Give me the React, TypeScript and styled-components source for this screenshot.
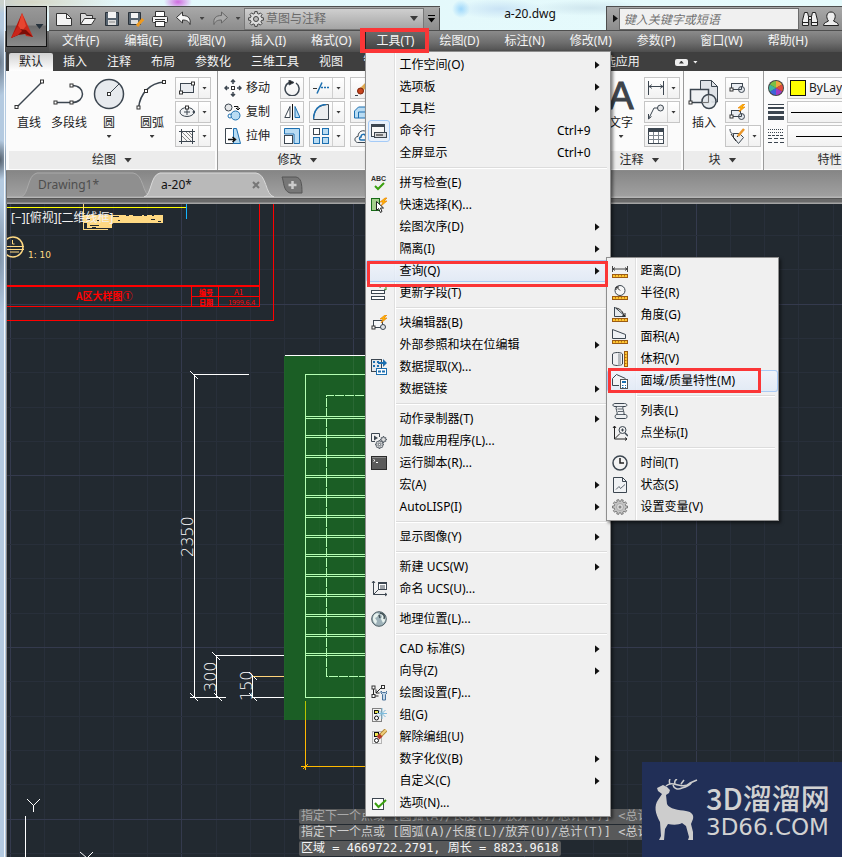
import React from 'react';
import styled, { createGlobalStyle, css } from 'styled-components';

const UI = `"Noto Sans", "Noto Sans CJK SC", sans-serif`;
const INK = '#3c4650';
const BLUE = '#1c6fb0';
const PALE = '#b9dcf3';
const RED = '#fb3637';

const GlobalStyle = createGlobalStyle`
  *, *::before, *::after { box-sizing: border-box; }
  html, body { margin: 0; height: 100%; overflow: hidden; }
  body { font: 12px/16px ${UI}; color: #000; }
  button, input, select { font: inherit; color: inherit; margin: 0; padding: 0; border: 0; background: none; border-radius: 0; }
  button { white-space: nowrap; cursor: default; }
  ul { list-style: none; margin: 0; padding: 0; }
  svg { display: block; flex: none; }
`;

/* ---------- shell ---------- */

const Desktop = styled.div`
  min-height: 100vh;
  display: flex;
  padding-left: 4px;
  overflow: hidden;
  background:
    radial-gradient(ellipse 14px 8px at 178px 2px, #d06be0, transparent),
    radial-gradient(circle 9px at 461px 9px, #9fd8fb, transparent),
    radial-gradient(ellipse 44px 10px at 500px 9px, #c9e3f5, transparent),
    radial-gradient(ellipse 60px 8px at 590px 8px, #cfe6ee, transparent),
    radial-gradient(ellipse 10px 34px at 0 62px, #6f7f90, transparent),
    radial-gradient(ellipse 10px 20px at 0 160px, #56626f, transparent),
    radial-gradient(ellipse 10px 60px at 0 255px, #7f93a8, transparent),
    radial-gradient(ellipse 90px 12px at 30px 2px, #d6d6c4, transparent),
    linear-gradient(to right, #b4cae0 0 6px, #e2f7fb 40px, #e6fbfc);
`;

const Window = styled.div`
  flex: 1;
  min-width: 0;
  display: flex;
  flex-direction: column;
  border-left: 1px solid #f4f8fb;
`;

const Header = styled.header`
  display: grid;
  grid-template: 31px 21px / 43px minmax(0, 1fr);
  padding-left: 1px;
  background: linear-gradient(transparent 31px, #6a6a6a 31px, #4a4a4a 52px);
`;

const AppButton = styled.button`
  grid-row: 1 / 3;
  width: 41px;
  height: 41px;
  margin-top: 6px;
  display: flex;
  align-items: center;
  justify-content: center;
  gap: 2px;
  border: 1px solid #111;
  background: linear-gradient(#989898, #8a8a8a 45%, #6c6c6c 50%, #8b8b8b);
`;

const TitleRow = styled.div`
  display: flex;
  min-width: 0;
  padding-top: 6px;
  border-bottom: 1px solid #4e4e4e;
`;

const QuickBar = styled.div`
  display: flex;
  align-items: center;
  padding-left: 3px;
  border-top: 1px solid #4e4e4e;
  background: linear-gradient(#a9a9a9, #8c8c8c);
`;

const QuickButton = styled.button<{ $narrow?: boolean }>`
  width: ${p => (p.$narrow ? 12 : 24)}px;
  height: 22px;
  display: flex;
  align-items: center;
  justify-content: center;
`;

const Workspace = styled.label`
  width: 180px;
  height: 22px;
  display: flex;
  align-items: center;
  gap: 2px;
  padding: 0 5px 0 3px;
  border: 1px solid #777;
  background: linear-gradient(#cfcfcf, #a5a5a5);
  color: #6a6a6a;
  select { flex: 1; appearance: none; outline: 0; }
`;

const Customize = styled.button`
  width: 16px;
  height: 22px;
  display: flex;
  flex-direction: column;
  align-items: center;
  justify-content: center;
  gap: 2px;
  border-right: 1px solid #4e4e4e;
  &::before { content: ''; width: 7px; height: 1px; background: #000; }
`;

const Title = styled.div`
  flex: 1;
  min-width: 0;
  padding-left: 14px;
  text-align: center;
  color: #111;
`;

const InfoCenter = styled.div`
  flex: none;
  width: 236px;
  display: flex;
  align-items: center;
  padding-left: 1px;
  overflow: hidden;
  border: 1px solid #4e4e4e;
  border-width: 1px 0 0 1px;
  background: linear-gradient(#a9a9a9, #8c8c8c);
`;

const SearchInput = styled.input`
  width: 180px;
  height: 22px;
  padding: 2px 4px 0;
  border: 1px solid #6b6b6b;
  background: #f0f0f0;
  outline: 0;
  &::placeholder { color: #707070; font-style: italic; opacity: 1; }
`;

const MenuBar = styled.nav`
  display: flex;
  padding-left: 1px;
  background: linear-gradient(#8b8b8b, #6e6e6e 55%, #4d4d4d);
`;

const MenuSlot = styled.div`
  position: relative;
  display: flex;
`;

const MenuTop = styled.button<{ $open?: boolean }>`
  padding: 0 13px 1px 12px;
  color: #f4f4f4;
  ${p => p.$open && css`
    background: linear-gradient(#6c6c6c, #3e3e3e);
    box-shadow: inset 0 0 0 1px #222;
  `}
`;

/* ---------- popup menus ---------- */

const Popup = styled.ul<{ $sub?: boolean }>`
  position: absolute;
  z-index: 5;
  top: ${p => (p.$sub ? '-3px' : '20px')};
  left: ${p => (p.$sub ? 'calc(100% - 4px)' : '0')};
  width: ${p => (p.$sub ? 173 : 246)}px;
  padding: 2px 0;
  border: 1px solid #8f8f8f;
  background: linear-gradient(to right, #f1f1f1 28px, #dfdfdf 28px 29px, #fff 29px 30px, #f0f0f0 30px);
  box-shadow: 2px 2px 3px rgba(0, 0, 0, 0.5);
`;

const Entry = styled.li`
  position: relative;
`;

const EntryButton = styled.button<{ $hot?: boolean }>`
  width: 100%;
  height: 22px;
  display: grid;
  grid-template-columns: 26px minmax(0, 1fr) auto 19px;
  align-items: center;
  text-align: left;
  ${p => p.$hot && css`
    background: linear-gradient(rgba(240, 244, 252, 0.8), rgba(222, 232, 246, 0.8));
    box-shadow: inset 0 0 0 1px #aacbf5;
    border-radius: 3px;
  `}
`;

const EntryIcon = styled.span<{ $checked?: boolean }>`
  width: 22px;
  height: 22px;
  margin-left: 2px;
  display: flex;
  align-items: center;
  justify-content: center;
  ${p => p.$checked && css`
    border: 1px solid #a5cbf7;
    border-radius: 3px;
    background: #e8f0fa;
  `}
`;

const EntryText = styled.span`
  padding-left: 8px;
`;

const Rule = styled.li`
  height: 2px;
  margin: 3px 3px 3px 30px;
  border-top: 1px solid #dcdcdc;
  border-bottom: 1px solid #fff;
`;

const SubArrow = styled.span`
  width: 5px;
  height: 8px;
  margin-left: 4px;
  background: #111;
  clip-path: polygon(0 0, 100% 50%, 0 100%);
`;

const Callout = styled.span<{ $kind: 'top' | 'row' | 'sub' }>`
  position: absolute;
  z-index: 8;
  pointer-events: none;
  border: 3px solid ${RED};
  ${p => p.$kind === 'top' && css`inset: -3px -2px -1px -5px; border-width: 4px 4px 4px 5px;`}
  ${p => p.$kind === 'row' && css`inset: 1px 2px -5px 1px;`}
  ${p => p.$kind === 'sub' && css`inset: -2px 17px -1px 1px;`}
`;

/* ---------- ribbon ---------- */

const TabStrip = styled.div`
  height: 19px;
  display: flex;
  align-items: flex-end;
  padding-left: 3px;
  margin-left: 1px;
  background: #3f3f3f;
  overflow: hidden;
`;

const RibbonTab = styled.button<{ $active?: boolean }>`
  flex: none;
  height: 18px;
  padding: 0 10px;
  color: ${p => (p.$active ? '#222' : '#f2f2f2')};
  ${p => p.$active && css`background: linear-gradient(#d2d2d2, #fff); border-radius: 2px 2px 0 0;`}
`;

const Toggle = styled.button`
  flex: none;
  display: flex;
  align-items: center;
  gap: 5px;
  height: 18px;
  margin-left: 25px;
`;

const TogglePill = styled.span`
  width: 13px;
  height: 7px;
  display: flex;
  align-items: center;
  justify-content: center;
  border-radius: 2px;
  background: #eee;
`;

const Ribbon = styled.div`
  display: flex;
  height: 100px;
  margin-left: 1px;
  padding-left: 3px;
  background: #fbfbfb;
  overflow: hidden;
  border-bottom: 1px solid #8a8a8a;
`;

const Panel = styled.section<{ $w: number }>`
  flex: 0 0 ${p => p.$w}px;
  display: flex;
  flex-direction: column;
  border-right: 1px solid #9a9a9a;
`;

const PanelBody = styled.div<{ $pad?: number }>`
  flex: 1;
  display: flex;
  padding: 6px 0 0 ${p => p.$pad ?? 0}px;
`;

const PanelTitle = styled.button`
  height: 18px;
  margin: 0 2px 1px 0;
  display: flex;
  align-items: center;
  justify-content: center;
  gap: 8px;
  background: #ececec;
  color: #2b2b2b;
`;

const Stack = styled.div`
  flex: none;
  display: flex;
  flex-direction: column;
  gap: 2px;
`;

const ColumnGap = styled.span<{ $w: number }>`
  flex: 0 0 ${p => p.$w}px;
`;

const BigButton = styled.button<{ $w: number }>`
  flex: none;
  width: ${p => p.$w}px;
  height: 68px;
  display: flex;
  flex-direction: column;
  align-items: center;
  padding-top: 1px;
  color: #222;
  svg { overflow: visible; }
`;

const BigLabel = styled.span`
  margin-top: 5px;
  margin-bottom: 4px;
`;

const LetterA = styled.span`
  height: 32px;
  font: 38px/36px "Liberation Sans", sans-serif;
  color: #3d434a;
  -webkit-text-stroke: 1px #3d434a;
`;

const TextButton = styled.button`
  height: 22px;
  display: flex;
  align-items: center;
  gap: 4px;
  color: #222;
`;

const Split = styled.div`
  height: 22px;
  display: flex;
  align-self: flex-start;
  border: 1px solid #c6c6c6;
  background: linear-gradient(#fff, #f1f1f1);
`;

const SplitMain = styled.button`
  width: 22px;
  display: flex;
  align-items: center;
  justify-content: center;
`;

const SplitMore = styled.button`
  width: 12px;
  display: flex;
  align-items: center;
  justify-content: center;
  border-left: 1px solid #d0d0d0;
`;

const PropRow = styled.label`
  display: flex;
  align-items: center;
  gap: 3px;
  height: 22px;
`;

const PropField = styled.span`
  width: 124px;
  height: 22px;
  display: flex;
  align-items: center;
  padding-left: 2px;
  border: 1px solid #c6c6c6;
  background: linear-gradient(#fff, #f1f1f1);
  select { flex: 1; appearance: none; outline: 0; padding-left: 3px; color: #222; }
`;

const Swatch = styled.span`
  width: 16px;
  height: 16px;
  border: 1px solid #111;
  background: #ffff00;
`;

const LinePreview = styled.span<{ $inset?: boolean }>`
  width: 80px;
  height: 1px;
  margin-left: ${p => (p.$inset ? 6 : 1)}px;
  background: #000;
`;

const Caret = styled.span<{ $size?: 'm' | 's'; $up?: boolean; $color?: string }>`
  width: ${p => (p.$size === 'm' ? 8 : 5)}px;
  height: ${p => (p.$size === 'm' ? 5 : 3)}px;
  background: ${p => p.$color ?? '#3a3a3a'};
  clip-path: ${p => (p.$up ? 'polygon(0 100%, 100% 100%, 50% 0)' : 'polygon(0 0, 100% 0, 50% 100%)')};
`;

/* ---------- document area ---------- */

const DocTabs = styled.div`
  height: 33px;
  display: flex;
  padding-left: 14px;
  margin-left: 1px;
  border-left: 1px solid #777;
  background: linear-gradient(#868686, #a0a0a0 25px, #b6b6b6 26px 27px, #555 27px 28px, #6a6a6a 28px 31px, #a4a4a4 32px);
`;

const DocTab = styled.button<{ $active?: boolean }>`
  position: relative;
  z-index: ${p => (p.$active ? 1 : 0)};
  width: 130px;
  height: 26px;
  margin-right: -7px;
  display: flex;
  align-items: center;
  justify-content: space-between;
  padding: 2px 14px 0 17px;
  color: ${p => (p.$active ? '#111' : '#4e4e4e')};
  > svg:first-child { position: absolute; left: 0; bottom: 0; z-index: -1; }
`;

const NewTab = styled.button`
  align-self: flex-start;
  margin: 5px 0 0 14px;
`;

const Viewport = styled.main`
  position: relative;
  flex: 1;
  margin-left: 1px;
  border-left: 1px solid #8a8a8a;
  background: #222930;
  overflow: hidden;
`;

const Sheet = styled.svg`
  position: absolute;
  inset: 0;
  width: 100%;
  height: 100%;
`;

const Console = styled.div`
  position: absolute;
  left: 292px;
  bottom: 1px;
  display: flex;
  flex-direction: column;
  align-items: flex-start;
  gap: 1px;
  font: 12px/15px "DejaVu Sans Mono", "Noto Sans CJK SC", monospace;
  white-space: pre;
`;

const ConsoleLine = styled.div<{ $tone: string }>`
  padding: 0 2px;
  border-radius: 2px;
  background: #58595a;
  color: ${p => p.$tone};
`;

const Brand = styled.aside`
  position: absolute;
  right: 0;
  bottom: 0;
  width: 200px;
  height: 95px;
  display: flex;
  gap: 7px;
  padding: 17px 0 0 12px;
  background: #212f57;
  color: #d2d2d2;
`;

const BrandText = styled.div`
  display: flex;
  flex-direction: column;
  white-space: nowrap;
`;

const BrandName = styled.span`
  font: 500 29px/36px "Noto Sans CJK SC", sans-serif;
`;

const BrandSite = styled.span`
  font: 23px/24px "DejaVu Sans", sans-serif;
`;

/* ---------- icons ---------- */

type IconProps = { s?: number; h?: number; children: React.ReactNode };
const Icon = ({ s = 16, h = s, children }: IconProps) => (
  <svg width={s} height={h} viewBox={`0 0 ${s} ${h}`} fill="none" stroke={INK} strokeWidth="1" aria-hidden="true">
    {children}
  </svg>
);

const Node = ({ x, y }: { x: number; y: number }) => (
  <rect x={x - 1.5} y={y - 1.5} width="3" height="3" fill="#fff" stroke="#333" />
);

const Bolt = ({ x, y }: { x: number; y: number }) => (
  <path transform={`translate(${x} ${y})`} d="M5 0 0 4h3L1 8l6-5H4l3-3Z" fill="#ffb400" stroke="#e8850c" strokeWidth=".7" />
);

const Ruler = () => (
  <>
    <rect x=".5" y="11.5" width="15" height="3" fill="#ffc531" stroke="#9c5b12" />
    <path d="M3.5 12v1.5M6.5 12v1.5M9.5 12v1.5M12.5 12v1.5" stroke="#b37416" />
  </>
);

const gearPath = (n: number, c: number, r: number, R: number) => {
  const pts: string[] = [];
  for (let i = 0; i < n; i++) {
    const a = (i / n) * Math.PI * 2;
    const w = Math.PI / n;
    [[-0.62, r], [-0.42, R], [0.42, R], [0.62, r]].forEach(([k, rad]) => {
      pts.push(`${(c + Math.cos(a + k * w) * rad).toFixed(2)} ${(c + Math.sin(a + k * w) * rad).toFixed(2)}`);
    });
  }
  return `M${pts.join('L')}Z`;
};

const BlockShape = ({ w = 11 }: { w?: number }) => (
  <>
    <rect x="2.5" y="6.5" width={w} height="6" fill="#e9edf2" />
    <circle cx="12.5" cy="12.5" r="3" fill="#e3e7ec" />
    <path d="M9 12.5h3.5v-3" />
    <Node x={2.5} y={12.5} />
  </>
);

const icons = {
  spell: (
    <svg width="18" height="18" viewBox="0 0 18 18" aria-hidden="true">
      <text x="1" y="7" fontSize="7" fontWeight="700" fill="#333" fontFamily="Liberation Sans, sans-serif">ABC</text>
      <path d="m5 12 3 3 6-6" fill="none" stroke="#3aa010" strokeWidth="2" />
    </svg>
  ),
  quickSelect: <Icon><rect x=".5" y="1.5" width="8" height="12" fill="#a5cf8c" stroke="#176b17" /><Bolt x={9} y={1} /><path d="M5.5 4.5v9l2-2 2 4 1.5-1-1.5-3.5h3Z" fill="#fff" stroke="#222" /></Icon>,
  command: <Icon><rect x=".5" y="1.5" width="13" height="12" fill="#f8f8f8" /><path d="M0 2.5h14" strokeWidth="3" /><rect x="3.5" y="9.5" width="12" height="5" fill="#d8dadd" /><path d="M5 12h7" stroke="#777" strokeWidth="2" /></Icon>,
  field: <Icon><rect x=".5" y="5.5" width="13" height="3" fill="#fff" /><rect x=".5" y="11.5" width="13" height="3" fill="#fff" /><path d="M9 3c0-2 4-3 6-1v3M15 5l-2-1" stroke="#3b8a22" /></Icon>,
  blockEdit: <Icon><rect x="2.5" y="5.5" width="9" height="7" fill="#f6f8fa" /><circle cx="12" cy="12" r="2.5" fill="#dfe3e8" /><Node x={2.5} y={12.5} /><Bolt x={9} y={0} /></Icon>,
  extract: <Icon><rect x=".5" y=".5" width="10" height="12" fill="#e4e8ec" /><path d="M2 3h2M6 3h2M2 7h2M6 7h2" strokeWidth="2" stroke={BLUE} /><path d="M7 3h5V0l4 4-4 4V5H7Z" fill={BLUE} stroke="none" /><rect x="5.5" y="9.5" width="10" height="6" fill="#fff" stroke={BLUE} /><path d="M7 12.5h3M11 12.5h3" stroke={BLUE} strokeWidth="2" /></Icon>,
  loadApp: <Icon><path d="M8.5 4V.5h-8v8H4" /><path d="m3 2.5 4 2.5-4 2.5Z" fill={INK} stroke="none" /><path d={gearPath(8, 8.5, 2.8, 4)} transform="translate(0 3)" fill="#ddd" strokeWidth=".8" /><circle cx="8.5" cy="11.5" r="1.2" fill="#fff" strokeWidth=".8" /><path d={gearPath(8, 12.5, 2, 3)} transform="translate(0 -6)" fill="#ddd" strokeWidth=".8" /></Icon>,
  script: <Icon><rect x=".5" y="1.5" width="15" height="13" fill="#5b5b5b" stroke="#2b2b2b" /><path d="M1 2.5h14" stroke="#8a8a8a" /><path d="m2.5 4.5 1.5 1-1.5 1M5 7.5h2" stroke="#fff" /></Icon>,
  ucs: <Icon><path d="M2.5 0v13.5H16M2.5 13.5l5-5M1 2l1.5-2L4 2M14 12l2 1.5-2 1.5" /><rect x="7.5" y="1.5" width="8" height="7" fill="#fff" /><path d="M7 2.5h9M9 5h5M9 7h5" /></Icon>,
  geo: <Icon><circle cx="8" cy="8" r="7.3" fill="#9db1b8" stroke="#4d5d63" /><path d="M3 4c2-2 4-2 5-1L6 6 4 7l2 3-1 3C2 11 1 8 3 4ZM9 3l2 2-1 3 2 4 2-2c1-3 0-5-2-7Z" fill="#e7f2ee" stroke="none" /><path d="M9 2c4 1 5 3 4 6M8 4l1 3" stroke="#435257" strokeWidth="1.5" /></Icon>,
  draftSet: <Icon><path d="M2.5 1v10h5M5 8l5-5M5 4.5V8h3.5" stroke="#222" /><Node x={2.5} y={2.5} /><Node x={2.5} y={11} /><Node x={12} y={2} /><path d="M10 6v2l1.5 1.5V15h3V9.5L16 8V6l-1.5 1.5h-3Z" fill="#c4d8ea" stroke="#4a7299" /></Icon>,
  group: <Icon><rect x="1.5" y="1.5" width="9" height="13" strokeDasharray="1 1" stroke="#111" /><rect x="3.5" y="3.5" width="4" height="3" fill="#e5df50" stroke="#111" /><circle cx="5.5" cy="11" r="2" fill="#fff" stroke="#111" /><path d="M11 1v11M6 6.5h10M7.5 3l7 7M14.5 3l-7 7" stroke="#7fbcdc" /></Icon>,
  ungroup: <Icon><rect x="1.5" y="2.5" width="9" height="12" strokeDasharray="1 1" stroke="#777" /><rect x="3.5" y="3.5" width="4" height="4" fill="#f2ea50" stroke="#111" /><circle cx="5.5" cy="11.5" r="2" fill="#fff" stroke="#111" /><path d="m8 8 7-7" stroke="#b58a3a" strokeWidth="4" /><path d="m8 8 7-7" stroke="#f0cf7c" strokeWidth="2" /><path d="m7 9 3-3" stroke="#b53a2c" strokeWidth="4" /></Icon>,
  options: <Icon><rect x="1.5" y="3.5" width="11" height="11" fill="#fff" /><path d="m4 8 3.5 4L15 5" stroke="#3aa010" strokeWidth="2" /></Icon>,
  distance: <Icon><path d="M.5 3v6M15.5 3v6M1 6h14M3 4.500 1 6l2 1.500M13 4.500 15 6l-2 1.500" stroke="#333" strokeWidth=".9" /><Ruler /></Icon>,
  radius: <Icon><circle cx="8" cy="5.5" r="5" fill="#f6f6f6" /><path d="M8 5.5 4.5 2M4 5V2h3" stroke="#222" /><Ruler /></Icon>,
  angle: <Icon><path d="M2.500 0v9.500h11Z" fill="#e6eaed" /><path d="M4 1c5 1 7 4 8 8M13 6v3h-3" stroke="#222" /><Ruler /></Icon>,
  area: <Icon><path d="M.5 9.500v-9l13 5v4Z" fill="#eef1f4" /><Ruler /></Icon>,
  volume: <Icon><path d="M.5 3v10c1 2 9 2 10 0V3c-1-2-9-2-10 0Z" fill="#f0f1f3" /><path d="M7.500 2.500v12" stroke="#b5babf" strokeWidth="3" /><rect x="12.500" y=".5" width="3" height="15" fill="#ffc531" stroke="#9c5b12" /><path d="M13 3.500h1.500M13 6.500h1.500M13 9.500h1.500M13 12.500h1.500" stroke="#b37416" /></Icon>,
  mass: <Icon><path d="M7 12.500H.5v-7l4-4 9 4" fill="#f1f3f5" /><rect x="8.500" y="6.500" width="7" height="9" fill="#fff" stroke="#555" /><path d="M10 9h4" stroke={BLUE} strokeWidth="2" /><path d="M10 12.500h1.500M13 12.500h1M10 14.500h1.500M13 14.500h1" stroke={BLUE} /></Icon>,
  list: <Icon><path d="M3 .5h9.500c3 0 3 3 .5 3h-2c-1 2 1.500 5 1 8h1.500c2 0 2 4 0 4H5c-2.500 0-2.500-4 0-4C6 9 3 6 4.500 3.500H3c-3 0-2.500-3 0-3Z" fill="#eef0f2" /><path d="M4 3.500h7M5 11.500h7M5.500 6h5M6 8.500h5" strokeWidth=".8" /></Icon>,
  point: <Icon><path d="M2.500 1v13H15M1 3l1.500-2L4 3M13 12.500l2 1.500-2 1.500M3 13.500l5-5" stroke="#222" /><circle cx="10.500" cy="5" r="3.500" fill="#eee" /><path d="m13 8 3 3" strokeWidth="1.500" /><path d="M9 5h3M10.500 3.500v3" /></Icon>,
  time: <Icon><circle cx="8" cy="8" r="7" fill="#f3f3f3" strokeWidth="1.500" /><path d="M8 3v5h4" stroke="#222" strokeWidth="1.500" /></Icon>,
  status: <Icon><path d="M1.500.5h9l4 4v11h-13Z" fill="#f0f2f4" /><path d="M10.500.5v4h4" /><path d="m4 12.500 3-3 1.500 2L13 7.500" strokeWidth=".8" /></Icon>,
  setvar: <Icon><path d={gearPath(10, 8, 5.8, 7.6)} fill="#c4c4c4" stroke="#666" strokeWidth=".8" /><circle cx="8" cy="8" r="3.500" fill="#dcdcdc" stroke="#aaa" /><circle cx="8" cy="8" r="1.500" fill="#888" stroke="none" /></Icon>,
};

type IconName = keyof typeof icons;

/* ---------- menu data ---------- */

type Item = { t: string; icon?: IconName; more?: boolean; key?: string; checked?: boolean; sub?: (Item | null)[]; mark?: 'row' | 'sub' };

const inquiry: (Item | null)[] = [
  { t: '距离(D)', icon: 'distance' },
  { t: '半径(R)', icon: 'radius' },
  { t: '角度(G)', icon: 'angle' },
  { t: '面积(A)', icon: 'area' },
  { t: '体积(V)', icon: 'volume' },
  { t: '面域/质量特性(M)', icon: 'mass', mark: 'sub' },
  null,
  { t: '列表(L)', icon: 'list' },
  { t: '点坐标(I)', icon: 'point' },
  null,
  { t: '时间(T)', icon: 'time' },
  { t: '状态(S)', icon: 'status' },
  { t: '设置变量(V)', icon: 'setvar' },
];

const tools: (Item | null)[] = [
  { t: '工作空间(O)', more: true },
  { t: '选项板', more: true },
  { t: '工具栏', more: true },
  { t: '命令行', icon: 'command', key: 'Ctrl+9', checked: true },
  { t: '全屏显示', key: 'Ctrl+0' },
  null,
  { t: '拼写检查(E)', icon: 'spell' },
  { t: '快速选择(K)...', icon: 'quickSelect' },
  { t: '绘图次序(D)', more: true },
  { t: '隔离(I)', more: true },
  { t: '查询(Q)', more: true, sub: inquiry, mark: 'row' },
  { t: '更新字段(T)', icon: 'field' },
  null,
  { t: '块编辑器(B)', icon: 'blockEdit' },
  { t: '外部参照和块在位编辑', more: true },
  { t: '数据提取(X)...', icon: 'extract' },
  { t: '数据链接', more: true },
  null,
  { t: '动作录制器(T)', more: true },
  { t: '加载应用程序(L)...', icon: 'loadApp' },
  { t: '运行脚本(R)...', icon: 'script' },
  { t: '宏(A)', more: true },
  { t: 'AutoLISP(I)', more: true },
  null,
  { t: '显示图像(Y)', more: true },
  null,
  { t: '新建 UCS(W)', more: true },
  { t: '命名 UCS(U)...', icon: 'ucs' },
  null,
  { t: '地理位置(L)...', icon: 'geo' },
  null,
  { t: 'CAD 标准(S)', more: true },
  { t: '向导(Z)', more: true },
  { t: '绘图设置(F)...', icon: 'draftSet' },
  { t: '组(G)', icon: 'group' },
  { t: '解除编组(U)', icon: 'ungroup' },
  { t: '数字化仪(B)', more: true },
  { t: '自定义(C)', more: true },
  { t: '选项(N)...', icon: 'options' },
];

const PopupMenu = ({ items, nested }: { items: (Item | null)[]; nested?: boolean }) => (
  <Popup $sub={nested} role="menu">
    {items.map((it, i) =>
      it === null ? (
        <Rule key={i} role="separator" />
      ) : (
        <Entry key={i} role="none">
          <EntryButton role="menuitem" $hot={!!it.mark}>
            <EntryIcon $checked={it.checked}>{it.icon && icons[it.icon]}</EntryIcon>
            <EntryText>{it.t}</EntryText>
            <span>{it.key}</span>
            {it.more && <SubArrow />}
          </EntryButton>
          {it.sub && <PopupMenu items={it.sub} nested />}
          {it.mark && <Callout $kind={it.mark} />}
        </Entry>
      ),
    )}
  </Popup>
);

/* ---------- header pieces ---------- */

const AppLogo = () => (
  <svg width="24" height="27" viewBox="0 0 24 27" aria-hidden="true">
    <path d="M12 0 1 25l7-3 3-9 1-13Z" fill="#b3160c" />
    <path d="m12 0 11 24-7-1-4-10Z" fill="#c9281a" />
    <path d="M12 0 8 13l4 5 4-5Z" fill="#e8452f" />
    <path d="m1 25 9-9 6 1 7 7-8-3-7 1Z" fill="#7c0d07" />
    <path d="m8 13 4 5-4 4-7 3Z" fill="#c9251a" />
  </svg>
);

const quick: { label: string; icon: React.ReactNode }[] = [
  { label: '新建', icon: <Icon><path d="M.5 2.500h10l5 5v7H.5Z" fill="#f4f4f4" stroke="#333" /><path d="M10.500 2.500v5h5" stroke="#333" /></Icon> },
  { label: '打开', icon: <Icon><path d="M.5 13.500v-11h5l1 2h6v3" fill="#ddd" stroke="#333" /><path d="m.5 13.500 4-6h11l-4 6Z" fill="#f5f5f5" stroke="#333" /></Icon> },
  { label: '保存', icon: <Icon><path d="M1.500 1.500h13v13h-13Z" fill="#56636f" stroke="#2b333b" /><rect x="4" y="1" width="8" height="6" fill="#f4f4f4" stroke="none" /><rect x="4" y="9" width="8" height="5" fill="#ddd" stroke="none" /><path d="M5 11h6" stroke="#888" /></Icon> },
  { label: '另存为', icon: <Icon><path d="M.5 1.500h12v12H.5Z" fill="#56636f" stroke="#2b333b" /><rect x="3" y="2" width="7" height="5" fill="#f4f4f4" stroke="none" /><rect x="3" y="9" width="7" height="4" fill="#ddd" stroke="none" /><path d="m9 15 6-7" stroke="#ee9a20" strokeWidth="3" /></Icon> },
  { label: '打印', icon: <Icon><path d="M3.500 6V.5h9V6" fill="#fff" stroke="#333" /><rect x=".5" y="5.500" width="15" height="6" rx="1" fill="#f4f4f4" stroke="#333" /><rect x="3.500" y="10.500" width="9" height="5" fill="#fff" stroke="#333" /><path d="M3 8.500h10" stroke="#333" /></Icon> },
  { label: '放弃', icon: <Icon><path d="M.5 6.500 6.500 1v3.500c6 0 8.500 3 7.500 9-1-3-3-4.500-7.500-4.500V12Z" fill="#f7f7f7" stroke="#333" /></Icon> },
];

const QuickAccess = () => (
  <QuickBar>
    {quick.map(q => <QuickButton key={q.label} aria-label={q.label}>{q.icon}</QuickButton>)}
    <QuickButton $narrow aria-label="放弃列表"><Caret $color="#444" /></QuickButton>
    <QuickButton aria-label="重做"><Icon><path d="M15.500 6.500 9.500 1v3.500c-6 0-8.500 3-7.500 9 1-3 3-4.500 7.500-4.500V12Z" fill="#aaa" stroke="#666" /></Icon></QuickButton>
    <QuickButton $narrow aria-label="重做列表"><Caret $color="#444" /></QuickButton>
    <Workspace>
      <Icon><path d={gearPath(8, 8, 5.7, 7.5)} fill="#ddd" stroke="#444" /><circle cx="8" cy="8" r="2.500" fill="#bbb" stroke="#444" /></Icon>
      <select aria-label="工作空间"><option>草图与注释</option></select>
      <Caret $size="m" />
    </Workspace>
    <Customize aria-label="自定义快速访问工具栏"><Caret $size="m" $color="#000" /></Customize>
  </QuickBar>
);

const ribbonTabs = ['默认', '插入', '注释', '布局', '参数化', '三维工具', '视图', '管理', '输出', '插件', 'Autodesk 360', '精选应用'];

/* ---------- ribbon panels ---------- */

const SplitTool = ({ label, more, children }: { label: string; more?: boolean; children: React.ReactNode }) => (
  <Split>
    <SplitMain aria-label={label}>{children}</SplitMain>
    {more && <SplitMore aria-label={`${label}选项`}><Caret /></SplitMore>}
  </Split>
);

const PanelFooter = ({ children }: { children: React.ReactNode }) => (
  <PanelTitle>{children}<Caret $size="m" /></PanelTitle>
);

const RibbonPanels = () => (
  <Ribbon>
    <Panel $w={209}>
      <PanelBody>
        <BigButton $w={40}>
          <Icon s={32}><path d="M3.500 29.500 29.500 3.500" strokeWidth="1.500" /><Node x={3.5} y={29} /><Node x={29} y={3.5} /></Icon>
          <BigLabel>直线</BigLabel>
        </BigButton>
        <BigButton $w={40}>
          <Icon s={32}><path d="M2.500 24.500H19c14 0 14-17 0-17" strokeWidth="1.500" /><Node x={2.5} y={24.5} /><Node x={18.5} y={24.5} /><Node x={18.5} y={7.5} /></Icon>
          <BigLabel>多段线</BigLabel>
        </BigButton>
        <BigButton $w={40}>
          <Icon s={32}><circle cx="16" cy="16" r="14.500" fill="#e7eaee" strokeWidth="1.500" /><path d="M16 16 26 6" /><Node x={16} y={16} /></Icon>
          <BigLabel>圆</BigLabel><Caret />
        </BigButton>
        <BigButton $w={46}>
          <Icon s={32}><path d="M2.500 30C4 16 13 5 28.500 4" strokeWidth="1.500" /><Node x={2.5} y={29.5} /><Node x={10} y={13} /><Node x={28} y={4} /></Icon>
          <BigLabel>圆弧</BigLabel><Caret />
        </BigButton>
        <Stack>
          <SplitTool label="矩形" more><Icon><rect x="1.500" y="3.500" width="13" height="9" fill="#e9ecf0" /><Node x={2} y={12.5} /><Node x={14} y={3.5} /></Icon></SplitTool>
          <SplitTool label="椭圆" more><Icon><ellipse cx="8" cy="8" rx="7" ry="4.500" fill="#f0f2f4" /><path d="M8 5v6M5 8h6" /><Node x={8} y={3.5} /><circle cx="15" cy="8" r="1" fill={INK} /></Icon></SplitTool>
          <SplitTool label="图案填充" more><Icon><path d="M0 3.500h16M0 13.500h16M2.500 1v15M13.500 1v15" /><path d="m3 8 5 5M3 4l9 9M7 4l6 6M10 4l3 3" stroke="#888" /></Icon></SplitTool>
        </Stack>
      </PanelBody>
      <PanelFooter>绘图</PanelFooter>
    </Panel>

    <Panel $w={162}>
      <PanelBody $pad={6}>
        <Stack>
          <TextButton><Icon s={18}><path d="M9 1v4M9 13v4M1 9h4M13 9h4M7 3l2-2 2 2M7 15l2 2 2-2M3 7 1 9l2 2M15 7l2 2-2 2" strokeWidth="1.500" /><Node x={9} y={9} /></Icon>移动</TextButton>
          <TextButton><Icon s={18}><circle cx="4.500" cy="4.500" r="3.500" fill="#e4e6e8" /><path d="M10 3.500h4V6M12 5l2 2 2-2" stroke="#111" /><circle cx="6" cy="13" r="2" fill="#fff" stroke={BLUE} /><circle cx="11.500" cy="12.500" r="4.500" fill={PALE} stroke={BLUE} /></Icon>复制</TextButton>
          <TextButton><Icon s={18}><path d="M8 1.500H1.500v15H11" fill="#fff" /><path d="M9.500 1.500h3l4 15h-7Z" fill={PALE} stroke={BLUE} /><path d="M4 12.500h7M8.500 10l3 2.500-3 2.500" stroke="#111" strokeWidth="1.500" /></Icon>拉伸</TextButton>
        </Stack>
        <ColumnGap $w={10} />
        <Stack>
          <SplitTool label="旋转"><Icon><path d="M5 2.500a7 7 0 1 0 7 .5" strokeWidth="1.500" /><path d="M5 0v5l5-2.500Z" fill="#222" /></Icon></SplitTool>
          <SplitTool label="镜像"><Icon><path d="M8.500 0v16" stroke="#111" /><path d="M6 2.500v11H.8Z" fill="#fff" /><path d="M11 2.500v11h5Z" fill={PALE} stroke={BLUE} /></Icon></SplitTool>
          <SplitTool label="缩放"><Icon><path d="M.5 4V.5h15v15H10V6H.5Z" fill={PALE} stroke={BLUE} /><rect x=".5" y="7.500" width="8" height="8" fill="#fff" /></Icon></SplitTool>
        </Stack>
        <ColumnGap $w={5} />
        <Stack>
          <SplitTool label="修剪" more><Icon><path d="M0 8.500h4" stroke="#333" /><path d="M8 7.500h2M11 7.500h2M14 7.500h2M9 2.500 4 13.500" stroke={BLUE} strokeWidth="1.500" /></Icon></SplitTool>
          <SplitTool label="圆角" more><Icon><path d="M.5 15.500C.5 6 6 .5 15.500.5v15Z" fill="#eceef0" /><path d="M.5 15C.5 6 6 .5 13 .5" stroke={BLUE} strokeWidth="1.500" /></Icon></SplitTool>
          <SplitTool label="阵列" more><Icon><rect x=".5" y=".5" width="6" height="6" fill="#fff" /><g fill={PALE} stroke={BLUE}><rect x="9.500" y=".5" width="6" height="6" /><rect x=".5" y="9.500" width="6" height="6" /><rect x="9.500" y="9.500" width="6" height="6" /></g></Icon></SplitTool>
        </Stack>
        <ColumnGap $w={5} />
        <Stack>
          <SplitTool label="删除"><Icon><path d="M1 15.500h3" /><path d="m6 11 9-9" stroke="#e0aa52" strokeWidth="4" /><circle cx="6.500" cy="11" r="3" fill="#c8441c" stroke="#7d250c" /></Icon></SplitTool>
          <SplitTool label="分解"><Icon><path d="M.5 14V7l4-4h11v7l-4 4Z" fill={PALE} stroke={BLUE} /><path d="M4.500 14V8h7" stroke={BLUE} /></Icon></SplitTool>
          <SplitTool label="偏移"><Icon><path d="M3.500 14.500c-4-1-3-6 .5-6 0-7 9-8 10-1v7Z" /><path d="M7 12c-2 0-2-3 0-3 0-3 4-4 5 0v3Z" stroke={BLUE} strokeWidth="1.500" /></Icon></SplitTool>
        </Stack>
      </PanelBody>
      <PanelFooter>修改</PanelFooter>
    </Panel>

    <Panel $w={218}>
      <PanelBody />
      <PanelFooter>图层</PanelFooter>
    </Panel>

    <Panel $w={86}>
      <PanelBody $pad={3}>
        <BigButton $w={40}><LetterA aria-hidden="true">A</LetterA><BigLabel>文字</BigLabel><Caret /></BigButton>
        <ColumnGap $w={3} />
        <Stack>
          <SplitTool label="线性标注" more><Icon><path d="M.5 1v14M15.500 1v14M1 6.500h14" /><path d="m4 4.500-3 2 3 2M12 4.500l3 2-3 2" strokeWidth=".8" /></Icon></SplitTool>
          <SplitTool label="引线" more><Icon><circle cx="12.500" cy="4" r="3" fill="#e6e8ea" /><path d="M9.500 4H6L1 14M.5 10v5l3-2.500" /></Icon></SplitTool>
          <SplitTool label="表格"><Icon><rect x=".5" y=".5" width="15" height="15" fill="#fff" /><path d="M.5 2.500h15" strokeWidth="3" /><path d="M.5 7.500h15M.5 11.500h15M5.500 4v11M10.500 4v11" stroke="#7d858d" /></Icon></SplitTool>
        </Stack>
      </PanelBody>
      <PanelFooter>注释</PanelFooter>
    </Panel>

    <Panel $w={80}>
      <PanelBody>
        <BigButton $w={40}>
          <Icon s={32}><path d="M12.500 14V2.500h11l6 6V24h-6" fill="#dfe3e8" /><path d="M23.500 2.500v6h6" /><rect x="2.500" y="11.500" width="18" height="13" fill="#eef1f4" strokeWidth="1.500" /><circle cx="21" cy="23.500" r="7" fill="#e2e6eb" fillOpacity=".85" strokeWidth="1.500" /><path d="M14 24.500h6.500V17" stroke="#777" /><Node x={2.5} y={24.5} /></Icon>
          <BigLabel>插入</BigLabel>
        </BigButton>
        <ColumnGap $w={1} />
        <Stack>
          <SplitTool label="创建块"><Icon><g transform="translate(0 -3)"><BlockShape /></g></Icon></SplitTool>
          <SplitTool label="编辑块"><Icon><BlockShape w={9} /><Bolt x={9} y={0} /></Icon></SplitTool>
          <SplitTool label="编辑属性" more><Icon><path d="M1 1c0 4 2 5 4 5M4.500 5.500h6l4 4-5 6-5-6Z" fill="#eef0f2" /><path d="m2 6 5 7M8 9l5-6" stroke="#222" /><path d="m9 8 6-7" stroke="#e9962a" strokeWidth="2.500" /></Icon></SplitTool>
        </Stack>
      </PanelBody>
      <PanelFooter>块</PanelFooter>
    </Panel>

    <Panel $w={150}>
      <PanelBody $pad={4}>
        <Stack>
          <PropRow>
            <Icon><g stroke="none"><circle cx="8" cy="8" r="8" fill="#444" /><path d="M8 8V1a7 7 0 0 1 6 3.500Z" fill="#f0a53c" /><path d="m8 8 6-3.500A7 7 0 0 1 14 11.500Z" fill="#e04a3c" /><path d="m8 8 6 3.500A7 7 0 0 1 8 15Z" fill="#a13cc4" /><path d="M8 8v7a7 7 0 0 1-6-3.500Z" fill="#3c63d8" /><path d="M8 8 2 11.500A7 7 0 0 1 2 4.500Z" fill="#3fb5a0" /><path d="M8 8 2 4.500A7 7 0 0 1 8 1Z" fill="#7bc043" /></g></Icon>
            <PropField><Swatch /><select aria-label="对象颜色"><option>ByLayer</option></select></PropField>
          </PropRow>
          <PropRow>
            <Icon><path d="M0 .5h16" /><path d="M0 4h16" strokeWidth="2" /><path d="M0 8.500h16" strokeWidth="3" /><path d="M0 14h16" strokeWidth="4" /></Icon>
            <PropField><LinePreview /></PropField>
          </PropRow>
          <PropRow>
            <Icon><path d="M0 1.500h16M0 4.500h16" strokeDasharray="1 1" /><path d="M0 7.500h16" strokeDasharray="3 1" /><path d="M0 10.500h16M0 14.500h16" strokeDasharray="4 2" /></Icon>
            <PropField><LinePreview $inset /></PropField>
          </PropRow>
        </Stack>
      </PanelBody>
      <PanelFooter>特性</PanelFooter>
    </Panel>
  </Ribbon>
);

/* ---------- drawing ---------- */

const gridX = Array.from({ length: 60 }, (_, i) => ({ at: Math.round(10 + i * 34.28) + 0.5, major: i % 5 === 0 }));
const gridY = Array.from({ length: 40 }, (_, i) => ({ at: Math.round(200.5 + i * 34.35) + 0.5, major: i % 5 === 3 }));
const treads = [416, 435, 455, 475, 495, 515, 535, 554, 574, 594, 614, 634, 653];

const tick = (x: number, y: number) => `M${x - 4} ${y - 4}l8 8`;

const Drawing = () => (
  <Sheet aria-label="图形">
    <g transform="translate(-7 -204)" fill="none" shapeRendering="crispEdges">
      {gridX.map(g => <path key={g.at} d={`M${g.at} 204V1600`} stroke={g.major ? '#343a4d' : '#282f3a'} />)}
      {gridY.map(g => <path key={g.at} d={`M7 ${g.at}H2100`} stroke={g.major ? '#343a4d' : '#282f3a'} />)}

      <path d="M7 207.500h179" stroke="#ffff00" />
      <path d="M186.500 204v15" stroke="#14b4ff" />
      <path d="M83.500 204v25h24" stroke="#ffd983" />
      <path d="M84 215h79v8h-51v5H87v-5h-3Z" fill="#ffd983" />
      <path d="M113 216h6M126 215h3M133 215h9M144 215h3M152 215h2M90 225h9M92 227h4M118 220h2M151 219h4M158 221h3M87 219h3M97 220h2" stroke="#222930" />

      <g stroke="#ffd983" shapeRendering="auto">
        <circle cx="13" cy="247" r="10" strokeWidth="1.500" />
        <path d="M7 246.500h17M7 249.500h17M12.500 240v4h2M10 252h9" />
      </g>
      <text x="28" y="258" fill="#ffd983" fontSize="9" fontFamily="DejaVu Sans">1: 10</text>

      <g stroke="#ff0000">
        <path d="M7 286h253" strokeWidth="2" />
        <path d="M259.500 204v102.500H7M273.500 204v116.500H7M191.500 286v20M218.500 286v20M191 296.500h69" />
      </g>
      <g fill="#ff0000" fontFamily="Noto Sans CJK SC, sans-serif">
        <text x="76" y="300" fontSize="10" fontWeight="700">A区大样图①</text>
        <text x="199" y="295" fontSize="7" fontWeight="900">编号</text>
        <text x="199" y="305" fontSize="7" fontWeight="900">日期</text>
        <text x="234" y="295" fontSize="8">A1</text>
        <text x="228" y="305" fontSize="7">1999.6.4</text>
      </g>

      <g fill="#ffffff" fontFamily="DejaVu Sans" fontSize="16" fontWeight="200">
        <text transform="translate(193 557) rotate(-90)">2350</text>
        <text transform="translate(216 692) rotate(-90)">300</text>
        <text transform="translate(252 701) rotate(-90)">150</text>
      </g>
      <g stroke="#ffffff">
        <path d="M249 374.500h-55V697M190 697.500h36M216.500 697v-41.500H287M252.500 676v21.500H287" />
        <path d={tick(194, 375) + tick(194, 697) + tick(218, 697) + tick(216, 656) + tick(253, 676) + tick(253, 697)} shapeRendering="auto" />
      </g>
      <path d="M253 676.500h34" stroke="#ffd37a" />

      <rect x="284" y="356" width="240" height="364" fill="#1b5e25" />
      {gridX.filter(g => g.at > 284 && g.at < 500).map(g => <path key={g.at} d={`M${g.at} 356v364`} stroke={g.major ? '#2a6834' : '#1f6129'} />)}
      <path d="M285 355.500h239" stroke="#ffffff" />
      <g stroke="#b6ffb4">
        <path d="M524 374.500H305.500V697H524" />
        <path d="M524 395.500H326.500V676H524" strokeDasharray="9 1" />
        {treads.map(y => <path key={y} d={`M305 ${y + 0.5}h219M305 ${y + 2.5}h219`} />)}
      </g>
      <path d="M305.500 701v19" stroke="#b8c400" />
      <path d="M305.500 720v50M301 766.500h223M303 769l5-5" stroke="#ffb900" />

      <g stroke="#ffffff">
        <path d="m27 799 6.500 6.500L40 799M33.500 805v7M80 852l7 6 6-6" shapeRendering="auto" />
        <path d="M25.500 816v600" />
      </g>
      <text x="11" y="222" fill="#f0f0f0" fontSize="12" fontFamily="Noto Sans, Noto Sans CJK SC, sans-serif">[−][俯视][二维线框]</text>
    </g>
  </Sheet>
);

const Deer = () => (
  <svg width="45" height="62" viewBox="0 0 45 62" fill="#cdcdcd" aria-hidden="true">
    <path d="M3 9 9 6l4 2 3 3-1 3-3 2 1 9c2 5 12 6 19 7 6 1 8 4 7 8l-2 5 2 8v8h-5l1-3-3-11-4-3c-3 2-9 2-14 1l-3 5-1 11H5l2-4-1-14C1 34 0 27 4 21l4-6-4-3Z" />
    <path d="M12 7c2-2 4-3 8-2 7 2 12 3 16-1l7-3M16 5c-1-2-1-3 0-5M21 5c-1-3 0-4 2-5M27 5l3-4M19 6c1 4 5 5 9 3 4-1 8-3 10-6" fill="none" stroke="#cdcdcd" strokeWidth="1.500" />
  </svg>
);

const TabShape = ({ active }: { active?: boolean }) => (
  <svg width="130" height="25" viewBox="0 0 130 25" aria-hidden="true">
    <path d="M0 25C8 23 6 3 16 1H112c11 1 9 22 18 24Z" fill={active ? '#b9b9b9' : '#8f8f8f'} stroke={active ? '#dadada' : '#aaaaaa'} />
  </svg>
);

const prompt = '指定下一个点或 [圆弧(A)/长度(L)/放弃(U)/总计(T)] <总计>:';

export default function App() {
  return (
    <Desktop>
      <GlobalStyle />
      <Window>
        <Header>
          <AppButton aria-label="应用程序菜单"><AppLogo /><Caret $size="m" $color="#26323c" /></AppButton>
          <TitleRow>
            <QuickAccess />
            <Title>a-20.dwg</Title>
            <InfoCenter>
              <QuickButton $narrow aria-label="展开"><SubArrow /></QuickButton>
              <SearchInput type="search" placeholder="键入关键字或短语" aria-label="键入关键字或短语" />
              <QuickButton aria-label="搜索"><Icon><g fill="#eee" stroke="#222"><path d="M2.500 1.500h3l1 4v9h-6v-5Z" /><path d="M13.500 1.500h-3l-1 4v9h6v-5Z" /><path d="M6.500 5.500h3v3h-3ZM1 11.500h5M10 11.500h5" /></g></Icon></QuickButton>
              <QuickButton aria-label="登录"><Icon><path d="M.5 14.500c0-3 3-3 5-4.500-3-4-2-9 2.500-9s5.500 5 2.500 9c2 1.500 5 1.500 5 4.500Z" fill="#eee" stroke="#222" /></Icon></QuickButton>
            </InfoCenter>
          </TitleRow>
          <MenuBar>
            {['文件(F)', '编辑(E)', '视图(V)', '插入(I)', '格式(O)'].map(t => <MenuTop key={t}>{t}</MenuTop>)}
            <MenuSlot>
              <MenuTop $open aria-haspopup="menu" aria-expanded="true">工具(T)</MenuTop>
              <PopupMenu items={tools} />
              <Callout $kind="top" />
            </MenuSlot>
            {['绘图(D)', '标注(N)', '修改(M)', '参数(P)', '窗口(W)', '帮助(H)'].map(t => <MenuTop key={t}>{t}</MenuTop>)}
          </MenuBar>
        </Header>

        <TabStrip role="tablist">
          {ribbonTabs.map((t, i) => <RibbonTab key={t} role="tab" $active={i === 0} aria-selected={i === 0}>{t}</RibbonTab>)}
          <Toggle aria-label="最小化功能区"><TogglePill><Caret $up /></TogglePill><Caret $color="#eee" /></Toggle>
        </TabStrip>
        <RibbonPanels />

        <DocTabs>
          <DocTab><TabShape />Drawing1*</DocTab>
          <DocTab $active>
            <TabShape active />a-20*
            <Icon s={8}><path d="m1 1 6 6M7 1 1 7" stroke="#777" strokeWidth="2" /></Icon>
          </DocTab>
          <NewTab aria-label="新图形">
            <Icon s={22} h={18}><path d="M1 1h14c5 1 6 6 6 16H9C2 15 3 5 1 1Z" fill="#777" stroke="#555" /><path d="M11.500 5v8M7.500 9h8" stroke="#ccc" strokeWidth="2.500" /></Icon>
          </NewTab>
        </DocTabs>

        <Viewport>
          <Drawing />
          <Console>
            <ConsoleLine $tone="#a9a9a9">{prompt}</ConsoleLine>
            <ConsoleLine $tone="#cfcfcf">{prompt}</ConsoleLine>
            <ConsoleLine $tone="#f4f4f4">区域 = 4669722.2791, 周长 = 8823.9618</ConsoleLine>
          </Console>
          <Brand>
            <Deer />
            <BrandText><BrandName>3D溜溜网</BrandName><BrandSite>3D66.COM</BrandSite></BrandText>
          </Brand>
        </Viewport>
      </Window>
    </Desktop>
  );
}
